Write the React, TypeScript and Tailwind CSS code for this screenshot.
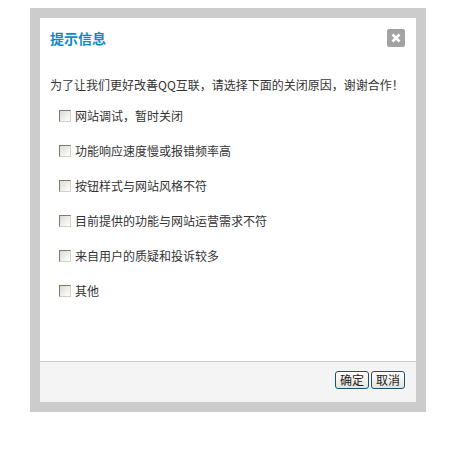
import React from 'react';

const reasons = [
  '网站调试，暂时关闭',
  '功能响应速度慢或报错频率高',
  '按钮样式与网站风格不符',
  '目前提供的功能与网站运营需求不符',
  '来自用户的质疑和投诉较多',
  '其他',
];

function Checkbox() {
  return (
    <span className="block w-[12px] h-[12px] border border-t-[#7a7a72] border-l-[#7a7a72] border-r-[#d4d0c8] border-b-[#d4d0c8] bg-gradient-to-br from-[#dcdcd2] to-[#ffffff] shrink-0" />
  );
}

export default function App() {
  return (
    <div
      className="w-[456px] h-[452px] bg-white pt-[8px] pl-[30px]"
      style={{ fontFamily: '"Noto Sans CJK SC", "Liberation Sans", sans-serif' }}
    >
      <div className="w-[396px] h-[404px] bg-[#cccccc] p-[10px]">
        <div className="h-full bg-white flex flex-col">
          <div className="flex items-center justify-between pl-[10px] pr-[11px] pt-[9px] h-[31px]">
            <span className="text-[14px] leading-[20px] font-bold text-[#0a8cc9]">提示信息</span>
            <span className="w-[18px] h-[18px] bg-[#a3a3a3] rounded-[2px] flex items-center justify-center">
              <svg width="10" height="10" viewBox="0 0 10 10">
                <path d="M1.5 1.5 L8.5 8.5 M8.5 1.5 L1.5 8.5" stroke="#fff" strokeWidth="2.6" />
              </svg>
            </span>
          </div>
          <div className="flex-1 pl-[10px] pt-[28px]">
            <p className="text-[12px] leading-[16px] text-[#333]">
              为了让我们更好改善QQ互联，请选择下面的关闭原因，谢谢合作！
            </p>
            <ul className="mt-[15px] pl-[9px] flex flex-col gap-[19px]">
              {reasons.map((r) => (
                <li key={r} className="flex items-center gap-[4px] h-[16px] text-[12px] text-[#333]">
                  <Checkbox />
                  <span>{r}</span>
                </li>
              ))}
            </ul>
          </div>
          <div className="h-[41px] border-t border-[#cccccc] bg-[#f4f4f4] flex items-start justify-end gap-[2px] pr-[11px] pt-[9px]">
            <button className="h-[18px] px-[4px] border border-[#1c4f7c] rounded-[3px] bg-gradient-to-b from-[#ffffff] to-[#e6e3d6] text-[12px] leading-[14px] text-[#222]">
              确定
            </button>
            <button className="h-[18px] px-[4px] border border-[#1c4f7c] rounded-[3px] bg-gradient-to-b from-[#ffffff] to-[#e6e3d6] text-[12px] leading-[14px] text-[#222]">
              取消
            </button>
          </div>
        </div>
      </div>
    </div>
  );
}
